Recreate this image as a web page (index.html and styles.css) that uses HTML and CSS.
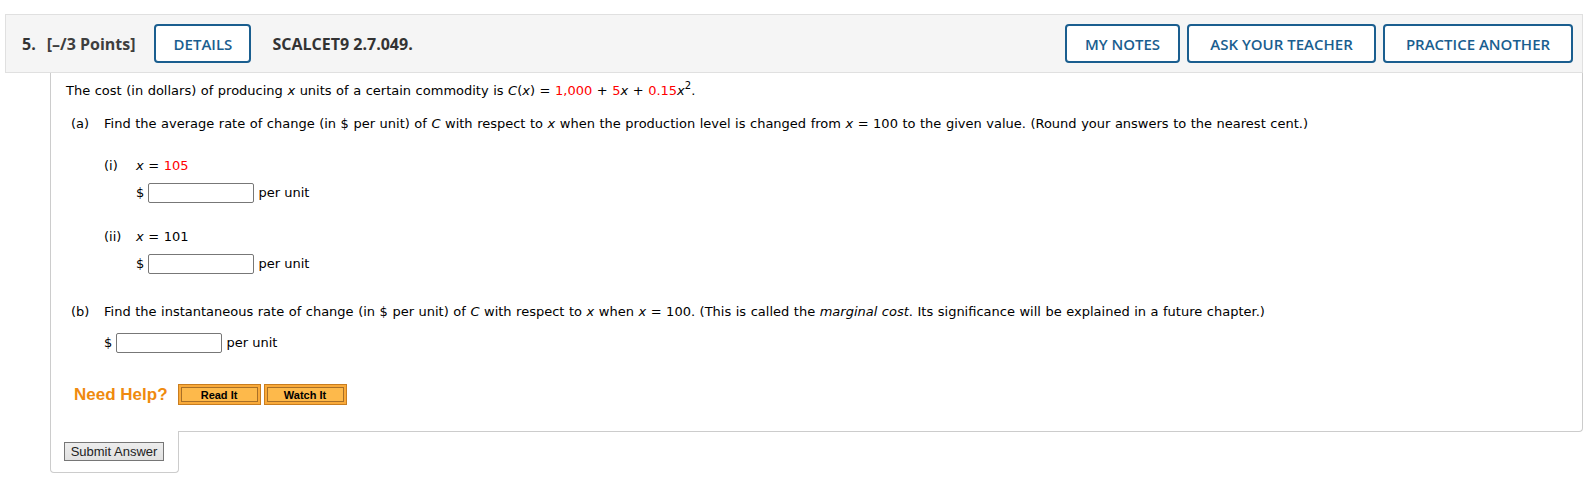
FILE: index.html
```html
<!DOCTYPE html>
<html>
<head>
<meta charset="utf-8">
<link rel="stylesheet" href="styles.css">
</head>
<body>
<div class="question">
  <div class="qhead">
    <div class="qnum">5.</div>
    <div class="qpoints">[–/3 Points]</div>
    <button class="hbtn">DETAILS</button>
    <div class="qid">SCALCET9 2.7.049.</div>
    <div class="spacer"></div>
    <div class="hactions">
      <button class="hbtn">MY NOTES</button>
      <button class="hbtn">ASK YOUR TEACHER</button>
      <button class="hbtn">PRACTICE ANOTHER</button>
    </div>
  </div>
  <div class="qbody">
    <p class="intro">The cost (in dollars) of producing <i>x</i> units of a certain commodity is <i>C</i>(<i>x</i>) = <span class="red">1,000</span> + <span class="red">5</span><i>x</i> + <span class="red">0.15</span><i>x</i><sup>2</sup>.</p>
    <div class="part">
      <div class="plabel">(a)</div>
      <div class="pbody">
        <p class="ptext">Find the average rate of change (in $ per unit) of <i>C</i> with respect to <i>x</i> when the production level is changed from <i>x</i> = 100 to the given value. (Round your answers to the nearest cent.)</p>
        <div class="sub sub1">
          <div class="slabel">(i)</div>
          <div class="sbody">
            <div class="sline"><i>x</i> = <span class="red">105</span></div>
            <div class="arow">$ <span class="inp"></span> per unit</div>
          </div>
        </div>
        <div class="sub sub2">
          <div class="slabel">(ii)</div>
          <div class="sbody">
            <div class="sline"><i>x</i> = 101</div>
            <div class="arow">$ <span class="inp"></span> per unit</div>
          </div>
        </div>
      </div>
    </div>
    <div class="part partb">
      <div class="plabel">(b)</div>
      <div class="pbody">
        <p class="ptext">Find the instantaneous rate of change (in $ per unit) of <i>C</i> with respect to <i>x</i> when <i>x</i> = 100. (This is called the <i>marginal cost</i>. Its significance will be explained in a future chapter.)</p>
        <div class="arow arowb">$ <span class="inp"></span> per unit</div>
      </div>
    </div>
    <div class="help">
      <span class="helplabel">Need Help?</span>
      <button class="hlp">Read It</button>
      <button class="hlp">Watch It</button>
    </div>
  </div>
  <div class="qfoot">
    <div class="tab"><button class="submit">Submit Answer</button></div>
  </div>
</div>
</body>
</html>
```
FILE: styles.css
```css
html, body { margin: 0; padding: 0; background: #fff; }
body { padding: 14px 12px 0 5px; }

.question { width: 1578px; }

.qhead {
  display: flex;
  align-items: center;
  height: 39px;
  padding: 9px 9px 9px 16px;
  background: #f5f5f5;
  border: 1px solid #e0e0e0;
  font-family: "Open Sans", "Noto Sans", sans-serif;
  font-weight: 700;
  font-size: 16px;
  color: #333;
}
.qnum { margin-right: 11px; }
.qpoints { margin-right: 19px; color: #3e3e3e; }
.qid { margin-left: 21px; }
.spacer { flex: 1; }
.hactions { display: flex; gap: 7px; }
.hbtn {
  height: 39px;
  padding: 0 16px;
  border: 2px solid #1a5e8f;
  border-radius: 4px;
  background: #fff;
  color: #1a5e8f;
  font-family: "Open Sans", "Noto Sans", sans-serif;
  font-weight: 600;
  font-size: 15px;
  cursor: pointer;
}
.hactions .hbtn:nth-child(1) { width: 115px; }
.hactions .hbtn:nth-child(2) { width: 189px; }
.hactions .hbtn:nth-child(3) { width: 190px; }
.qhead > .hbtn { width: 97px; }

.qbody {
  margin-left: 45px;
  border-left: 1px solid #ccc;
  border-right: 1px solid #ccc;
  border-bottom: 1px solid #ccc;
  border-bottom-right-radius: 4px;
  padding: 8px 15px 0 15px;
  height: 350px;
  font-family: Verdana, "DejaVu Sans", sans-serif;
  font-size: 13px;
  word-spacing: 0.4px;
  color: #000;
  line-height: 20px;
}
.qbody p { margin: 0; }
.red { color: #f00; }
sup { font-size: 10px; line-height: 0; vertical-align: 6px; }

.intro { margin-bottom: 13px !important; }
.part { display: flex; margin-left: 5px; }
.plabel { width: 33px; flex: none; }
.pbody { flex: 1; }
.sub { display: flex; margin-top: 22px; }
.sub2 { margin-top: 23px; }
.slabel { width: 32px; flex: none; }
.arow { margin-top: 6px; height: 22px; display: flex; align-items: center; white-space: pre; word-spacing: 0; }
.inp {
  display: inline-block;
  width: 104px;
  height: 18px;
  border: 1px solid #777;
  border-radius: 2px;
  background: #fff;
}
.partb { margin-top: 27px; }
.arowb { margin-top: 10px; }

.help {
  display: flex;
  align-items: center;
  margin-top: 30px;
  margin-left: 8px;
  gap: 3px;
}
.helplabel {
  font-family: "Liberation Sans", Arial, sans-serif;
  font-weight: bold;
  font-size: 17px;
  color: #ef8a0e;
  margin-right: 7px;
  word-spacing: 0;
}
.hlp {
  width: 83px;
  height: 21px;
  padding: 0;
  border: 1px solid #c97d1f;
  background: #fdb94b;
  box-shadow: inset 0 0 0 2px #f9aa3a, inset 0 0 0 3px #a86f27;
  font-family: "Liberation Sans", Arial, sans-serif;
  font-weight: bold;
  font-size: 11px;
  color: #000;
  word-spacing: 0;
}

.qfoot { display: flex; margin-left: 45px; }
.tab {
  margin-top: -1px;
  width: 127px;
  height: 41px;
  background: #fff;
  border-left: 1px solid #ccc;
  border-right: 1px solid #ccc;
  border-bottom: 1px solid #ccc;
  border-radius: 0 0 4px 4px;
  display: flex;
  align-items: flex-start;
}
.submit {
  margin: 11px 0 0 13px;
  width: 100px;
  height: 19px;
  padding: 0;
  border: 1px solid #767676;
  background: linear-gradient(#ededed, #e1e1e1);
  font-family: "Liberation Sans", Arial, sans-serif;
  font-size: 13px;
  color: #222;
}
```
